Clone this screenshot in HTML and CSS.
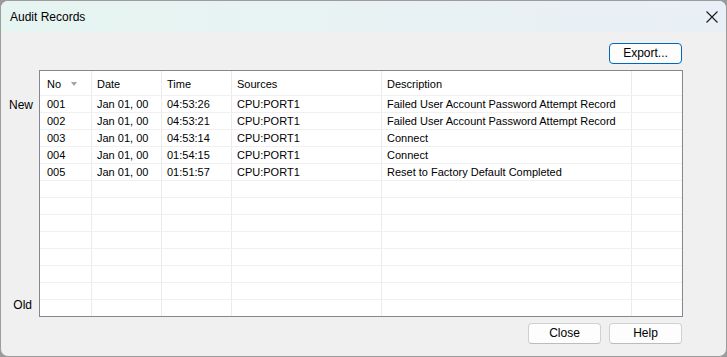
FILE: index.html
```html
<!DOCTYPE html>
<html>
<head>
<meta charset="utf-8">
<link rel="stylesheet" href="styles.css">
</head>
<body>
<div class="window">
  <div class="titlebar">
    <span class="title">Audit Records</span>
    <svg class="close-x" width="12" height="12" viewBox="0 0 12 12"><path d="M0.5 0.5 L11.5 11.5 M11.5 0.5 L0.5 11.5" stroke="#1a1a1a" stroke-width="1.1" fill="none"/></svg>
  </div>
  <div class="body">
    <div class="toolbar"><button class="btn btn-default">Export...</button></div>
    <div class="main">
      <div class="labels"><span>New</span><span>Old</span></div>
      <div class="grid">
        <div class="row head">
          <div class="c c1">No<span class="sort"></span></div><div class="c c2">Date</div><div class="c c3">Time</div><div class="c c4">Sources</div><div class="c c5">Description</div><div class="c c6"></div>
        </div>
        <div class="row"><div class="c c1">001</div><div class="c c2">Jan 01, 00</div><div class="c c3">04:53:26</div><div class="c c4">CPU:PORT1</div><div class="c c5">Failed User Account Password Attempt Record</div><div class="c c6"></div></div>
        <div class="row"><div class="c c1">002</div><div class="c c2">Jan 01, 00</div><div class="c c3">04:53:21</div><div class="c c4">CPU:PORT1</div><div class="c c5">Failed User Account Password Attempt Record</div><div class="c c6"></div></div>
        <div class="row"><div class="c c1">003</div><div class="c c2">Jan 01, 00</div><div class="c c3">04:53:14</div><div class="c c4">CPU:PORT1</div><div class="c c5">Connect</div><div class="c c6"></div></div>
        <div class="row"><div class="c c1">004</div><div class="c c2">Jan 01, 00</div><div class="c c3">01:54:15</div><div class="c c4">CPU:PORT1</div><div class="c c5">Connect</div><div class="c c6"></div></div>
        <div class="row"><div class="c c1">005</div><div class="c c2">Jan 01, 00</div><div class="c c3">01:51:57</div><div class="c c4">CPU:PORT1</div><div class="c c5">Reset to Factory Default Completed</div><div class="c c6"></div></div>
        <div class="row"><div class="c c1"></div><div class="c c2"></div><div class="c c3"></div><div class="c c4"></div><div class="c c5"></div><div class="c c6"></div></div>
        <div class="row"><div class="c c1"></div><div class="c c2"></div><div class="c c3"></div><div class="c c4"></div><div class="c c5"></div><div class="c c6"></div></div>
        <div class="row"><div class="c c1"></div><div class="c c2"></div><div class="c c3"></div><div class="c c4"></div><div class="c c5"></div><div class="c c6"></div></div>
        <div class="row"><div class="c c1"></div><div class="c c2"></div><div class="c c3"></div><div class="c c4"></div><div class="c c5"></div><div class="c c6"></div></div>
        <div class="row"><div class="c c1"></div><div class="c c2"></div><div class="c c3"></div><div class="c c4"></div><div class="c c5"></div><div class="c c6"></div></div>
        <div class="row"><div class="c c1"></div><div class="c c2"></div><div class="c c3"></div><div class="c c4"></div><div class="c c5"></div><div class="c c6"></div></div>
        <div class="row"><div class="c c1"></div><div class="c c2"></div><div class="c c3"></div><div class="c c4"></div><div class="c c5"></div><div class="c c6"></div></div>
        <div class="row last"><div class="c c1"></div><div class="c c2"></div><div class="c c3"></div><div class="c c4"></div><div class="c c5"></div><div class="c c6"></div></div>
      </div>
    </div>
    <div class="footer">
      <button class="btn">Close</button>
      <button class="btn">Help</button>
    </div>
  </div>
</div>
</body>
</html>
```
FILE: styles.css
```css
html, body {
  margin: 0;
  padding: 0;
  background: #9a9a9a;
}
body {
  font-family: "Liberation Sans", Arial, sans-serif;
  font-size: 12px;
  color: #000;
}
.window {
  box-sizing: border-box;
  width: 727px;
  height: 357px;
  border: 1px solid #9c9c9c;
  border-radius: 8px;
  overflow: hidden;
  background: #f0f0f0;
  display: flex;
  flex-direction: column;
}
.titlebar {
  height: 31px;
  flex: none;
  display: flex;
  align-items: center;
  justify-content: space-between;
  padding: 0 8px 0 9px;
  background: linear-gradient(90deg, #e6f5f1 0%, #e8f2f3 50%, #e9eff6 100%);
}
.title {
  font-size: 12px;
  padding-top: 1px;
}
.close-x {
  display: block;
}
.body {
  flex: 1;
  display: flex;
  flex-direction: column;
}
.toolbar {
  display: flex;
  justify-content: flex-end;
  padding: 11px 44px 0 0;
  height: 22px;
}
.btn {
  box-sizing: border-box;
  height: 21px;
  width: 73px;
  font-family: "Liberation Sans", Arial, sans-serif;
  font-size: 12px;
  color: #000;
  background: #fdfdfd;
  border: 1px solid #d0d0d0;
  border-bottom-color: #bcbcbc;
  border-radius: 4px;
  padding: 0;
  line-height: 19px;
}
.btn-default {
  border: 1px solid #0067c0;
  width: 73px;
  height: 21px;
}
.main {
  display: flex;
  margin-top: 5px;
}
.labels {
  width: 37px;
  box-sizing: border-box;
  padding: 27px 5px 3px 0;
  display: flex;
  flex-direction: column;
  justify-content: space-between;
  align-items: flex-end;
}
.labels span {
  line-height: 17px;
}
.labels span:last-child {
  margin-right: 1px;
}
.grid {
  box-sizing: border-box;
  width: 644px;
  margin-left: 1px;
  border: 1px solid #828790;
  background: #fff;
  font-size: 11px;
}
.row {
  display: flex;
  height: 17px;
  box-sizing: border-box;
  border-bottom: 1px solid #f0f0f0;
}
.row.head {
  height: 25px;
  border-bottom: 1px solid #f0f0f0;
}
.row.last {
  border-bottom: none;
  height: 16px;
}
.c {
  box-sizing: border-box;
  border-right: 1px solid #ebebeb;
  padding-left: 5px;
  padding-top: 1px;
  line-height: 15px;
  white-space: nowrap;
  overflow: hidden;
  flex: none;
}
.head .c {
  line-height: 24px;
  padding-top: 1px;
  position: relative;
}
.c1 { width: 52px; padding-left: 7px; }
.c2 { width: 70px; }
.c3 { width: 70px; }
.c4 { width: 150px; }
.c5 { width: 250px; }
.c6 { width: 50px; border-right: none; }
.sort {
  position: absolute;
  left: 31px;
  top: 11px;
  width: 0;
  height: 0;
  border-left: 3px solid transparent;
  border-right: 3px solid transparent;
  border-top: 4px solid #a3a3a3;
}
.footer {
  display: flex;
  justify-content: flex-end;
  gap: 8px;
  padding: 6px 44px 0 0;
}
```
